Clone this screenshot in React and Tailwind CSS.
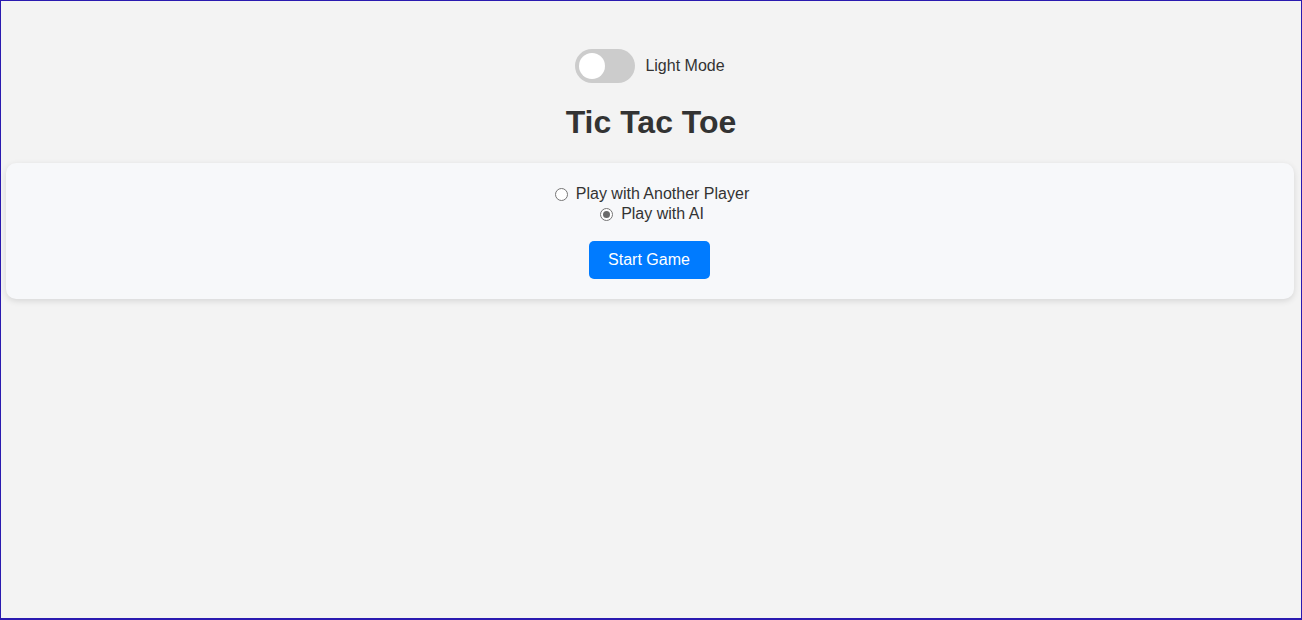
import { useState } from "react";

export default function App() {
  const [mode, setMode] = useState("ai");
  const [dark, setDark] = useState(false);

  const Radio = ({ value, label }) => (
    <label className="flex items-center cursor-pointer" onClick={() => setMode(value)}>
      <span className="w-[13px] h-[13px] rounded-full border border-[#767676] bg-white flex items-center justify-center ml-[4px] mr-[8px]">
        {mode === value && <span className="w-[7px] h-[7px] rounded-full bg-[#6b6b6b]" />}
      </span>
      <span>{label}</span>
    </label>
  );

  return (
    <div className="h-[620px] bg-[#f3f3f3] border-t border-x border-b-2 border-[#2a1ab0] flex flex-col items-center text-[#333] font-['Liberation_Sans',Arial,sans-serif]">
      <div className="mt-[48px] mr-[2px] flex items-center gap-[10px]">
        <button
          onClick={() => setDark(!dark)}
          className="w-[60px] h-[34px] rounded-full bg-[#cccccc] flex items-center px-[4px]"
        >
          <span className="w-[26px] h-[26px] rounded-full bg-white" />
        </button>
        <span className="text-[16px]">Light Mode</span>
      </div>

      <h1 className="mt-[21px] text-[32px] leading-[37px] font-bold">Tic Tac Toe</h1>

      <div className="mt-[22px] self-stretch ml-[5px] mr-[7px] bg-[#f7f8fa] rounded-[10px] shadow-[0_2px_6px_rgba(0,0,0,0.12)] pt-[21px] pb-[20px] flex flex-col items-center text-[16px] leading-[20px]">
        <Radio value="pvp" label="Play with Another Player" />
        <Radio value="ai" label="Play with AI" />
        <button className="mt-[17px] mr-[2px] w-[121px] h-[38px] bg-[#007bff] text-white rounded-[5px] text-[16px]">
          Start Game
        </button>
      </div>
    </div>
  );
}
